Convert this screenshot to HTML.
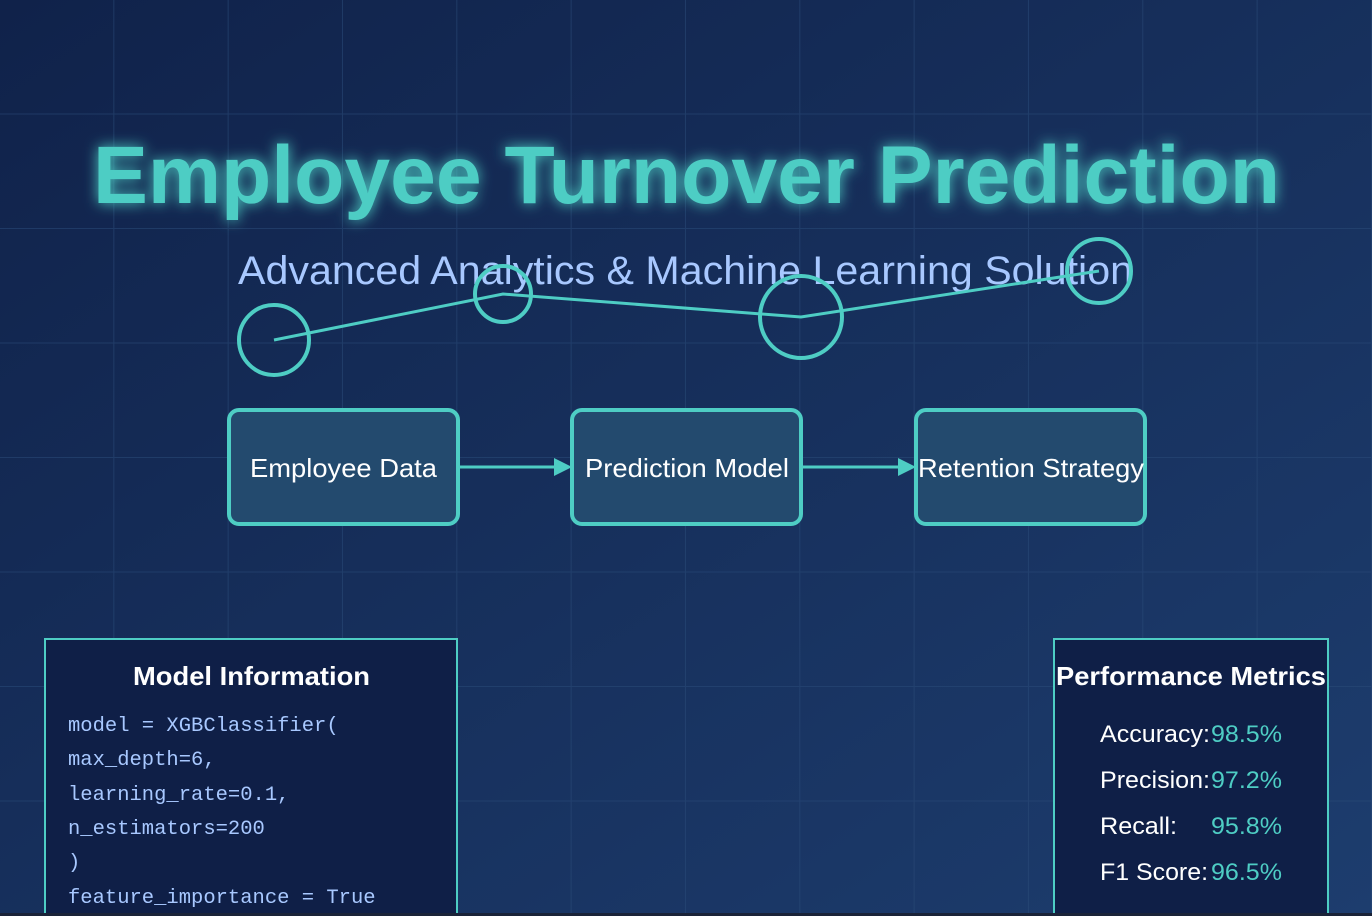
<!DOCTYPE html>
<html><head><meta charset="utf-8"><style>
html,body{margin:0;padding:0;width:1372px;height:916px;overflow:hidden;background:#13264d;}
svg{display:block}
</style></head><body>
<svg width="1372" height="916" viewBox="0 0 1372 916" xmlns="http://www.w3.org/2000/svg">
<defs>
<linearGradient id="bg" x1="0" y1="0" x2="1" y2="1">
<stop offset="0" stop-color="#10224a"/><stop offset="1" stop-color="#1d3d6e"/>
</linearGradient>
<filter id="glow" x="-20%" y="-50%" width="140%" height="200%">
<feGaussianBlur stdDeviation="7" result="b"/>
<feMerge><feMergeNode in="b"/><feMergeNode in="SourceGraphic"/></feMerge>
</filter>
<pattern id="grid" width="114.33" height="114.5" patternUnits="userSpaceOnUse">
<path d="M114.33 0V114.5M0 114.5H114.33" fill="none" stroke="#2a4a78" stroke-opacity="0.55" stroke-width="2"/>
</pattern>
</defs>
<rect width="1372" height="916" fill="url(#bg)"/>
<rect width="1372" height="916" fill="url(#grid)"/>
<text x="93" y="203" textLength="1187" lengthAdjust="spacingAndGlyphs" font-family="Liberation Sans, sans-serif" font-weight="bold" font-size="82" fill="#4ecdc4" filter="url(#glow)">Employee Turnover Prediction</text>
<text x="238" y="284" textLength="895" lengthAdjust="spacingAndGlyphs" font-family="Liberation Sans, sans-serif" font-size="40" fill="#a8c8ff">Advanced Analytics &amp; Machine Learning Solution</text>
<g fill="none" stroke="#4ecdc4" stroke-width="4">
<polyline points="274,340 503,294 801,317 1099,271" stroke-width="3"/>
<circle cx="274" cy="340" r="35"/>
<circle cx="503" cy="294" r="28"/>
<circle cx="801" cy="317" r="41"/>
<circle cx="1099" cy="271" r="32"/>
</g>
<g stroke="#4ecdc4" stroke-width="4" fill="#234a6e">
<rect x="229" y="410" width="229" height="114" rx="10"/>
<rect x="572" y="410" width="229" height="114" rx="10"/>
<rect x="916" y="410" width="229" height="114" rx="10"/>
</g>
<g stroke="#4ecdc4" stroke-width="3">
<line x1="458" y1="467" x2="556" y2="467"/>
<line x1="802" y1="467" x2="900" y2="467"/>
</g>
<g fill="#4ecdc4">
<polygon points="554,458 572,467 554,476"/>
<polygon points="898,458 916,467 898,476"/>
</g>
<g font-family="Liberation Sans, sans-serif" font-size="26" fill="#ffffff" lengthAdjust="spacingAndGlyphs">
<text x="250" y="477" textLength="187" lengthAdjust="spacingAndGlyphs">Employee Data</text>
<text x="585" y="477" textLength="204" lengthAdjust="spacingAndGlyphs">Prediction Model</text>
<text x="918" y="477" textLength="226" lengthAdjust="spacingAndGlyphs">Retention Strategy</text>
</g>
<rect x="45" y="639" width="412" height="285" fill="#0f1f47" stroke="#4ecdc4" stroke-width="2"/>
<text x="133" y="685" textLength="237" lengthAdjust="spacingAndGlyphs" font-family="Liberation Sans, sans-serif" font-weight="bold" font-size="26" fill="#fff">Model Information</text>
<g font-family="Liberation Mono, monospace" font-size="20.5" fill="#a8c8ff">
<text x="68" y="731">model = XGBClassifier(</text>
<text x="68" y="765">max_depth=6,</text>
<text x="68" y="800">learning_rate=0.1,</text>
<text x="68" y="834">n_estimators=200</text>
<text x="68" y="868">)</text>
<text x="68" y="903">feature_importance = True</text>
</g>
<rect x="1054" y="639" width="274" height="285" fill="#0f1f47" stroke="#4ecdc4" stroke-width="2"/>
<text x="1056" y="685" textLength="270" lengthAdjust="spacingAndGlyphs" font-family="Liberation Sans, sans-serif" font-weight="bold" font-size="26" fill="#fff">Performance Metrics</text>
<g font-family="Liberation Sans, sans-serif" font-size="24">
<text x="1100" y="742" fill="#fff" textLength="110" lengthAdjust="spacingAndGlyphs">Accuracy:</text><text x="1211" y="742" fill="#4ecdc4" textLength="71" lengthAdjust="spacingAndGlyphs">98.5%</text>
<text x="1100" y="788" fill="#fff" textLength="110" lengthAdjust="spacingAndGlyphs">Precision:</text><text x="1211" y="788" fill="#4ecdc4" textLength="71" lengthAdjust="spacingAndGlyphs">97.2%</text>
<text x="1100" y="834" fill="#fff" textLength="77" lengthAdjust="spacingAndGlyphs">Recall:</text><text x="1211" y="834" fill="#4ecdc4" textLength="71" lengthAdjust="spacingAndGlyphs">95.8%</text>
<text x="1100" y="880" fill="#fff" textLength="108" lengthAdjust="spacingAndGlyphs">F1 Score:</text><text x="1211" y="880" fill="#4ecdc4" textLength="71" lengthAdjust="spacingAndGlyphs">96.5%</text>
</g>
<rect x="0" y="913" width="1372" height="3" fill="#1a2338"/>
</svg>
</body></html>
